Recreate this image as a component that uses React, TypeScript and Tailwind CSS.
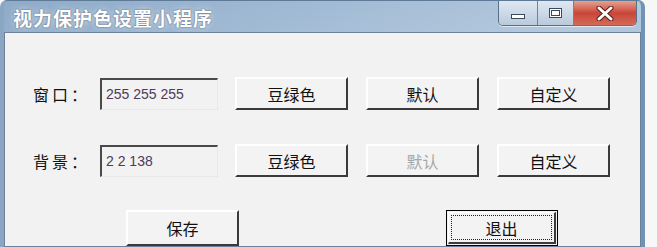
import { ReactNode } from "react"

const cjk = "font-['Noto_Sans_CJK_SC',sans-serif]"

type BtnProps = {
    children: ReactNode
    disabled?: boolean
    isDefault?: boolean
    className?: string
}

function Btn({ children, disabled, isDefault, className }: BtnProps) {
    if (isDefault) {
        return (
            <div className={`w-[112px] h-[36px] border border-black bg-[#f3f3f3] p-[1px] ${className ?? ""}`}>
                <div className="h-full border-t border-l border-white border-r-2 border-b-2 border-r-[#3c3c3c] border-b-[#3c3c3c] p-[2px]">
                    <div className={`h-full border border-dotted border-[#222] flex items-center justify-center text-[16px] text-[#111] ${cjk}`}>
                        {children}
                    </div>
                </div>
            </div>
        )
    }
    return (
        <div
            className={`w-[113px] h-[33px] flex items-center justify-center bg-[#f3f3f3] border-t-2 border-l-2 border-t-white border-l-white border-r-2 border-b-2 border-r-[#3a3a3a] border-b-[#3a3a3a] text-[16px] ${cjk} ${disabled ? "text-[#a8a8a8]" : "text-[#111]"} ${className ?? ""}`}
        >
            {children}
        </div>
    )
}

function Field({ value }: { value: string }) {
    return (
        <div className="w-[118px] h-[32px] flex items-center pl-[4px] bg-[#f2f2f2] border-t-2 border-l-2 border-t-[#4a4a4a] border-l-[#4a4a4a] border-r border-b border-r-[#e8e8e8] border-b-[#e8e8e8] font-['Liberation_Sans',sans-serif] text-[14px] text-[#4d3a5c]">
            {value}
        </div>
    )
}

function Row({ label, value, defaultDisabled }: { label: string, value: string, defaultDisabled?: boolean }) {
    return (
        <div className="flex items-center">
            <div className={`w-[67px] text-[16px] tracking-[3px] text-[#111] ${cjk}`}>{label}</div>
            <Field value={value} />
            <div className="flex gap-[18px] ml-[17px]">
                <Btn>豆绿色</Btn>
                <Btn disabled={defaultDisabled}>默认</Btn>
                <Btn>自定义</Btn>
            </div>
        </div>
    )
}

function CaptionButtons() {
    return (
        <div className="flex h-[25px] rounded-b-[5px] border border-t-0 border-[#5b6f86] overflow-hidden shadow-[0_1px_0_rgba(255,255,255,0.6)]">
            <div className="w-[39px] flex items-center justify-center bg-gradient-to-b from-[#dfe8f2] to-[#b9cadc] border-r border-[#6f849b]">
                <div className="w-[14px] h-[5px] mt-[6px] bg-white border border-[#3a4a5c]" />
            </div>
            <div className="w-[36px] flex items-center justify-center bg-gradient-to-b from-[#dfe8f2] to-[#b9cadc] border-r border-[#6f849b]">
                <div className="w-[13px] h-[10px] bg-white border border-[#3a4a5c] p-[1px]">
                    <div className="w-full h-full border border-[#3a4a5c]" />
                </div>
            </div>
            <div className="w-[62px] flex items-center justify-center bg-gradient-to-b from-[#e7a090] via-[#c8453a] to-[#d46a55]">
                <svg width="18" height="15" viewBox="0 0 18 15">
                    <path d="M3 2 L15 13 M15 2 L3 13" stroke="#5a1a14" strokeWidth="5" strokeLinecap="round" />
                    <path d="M3 2 L15 13 M15 2 L3 13" stroke="#ffffff" strokeWidth="3" strokeLinecap="round" />
                </svg>
            </div>
        </div>
    )
}

export default function App() {
    return (
        <div className="w-[657px] h-[247px] overflow-hidden bg-[#f7f7f7]">
            <div className="w-[645px] h-full flex flex-col rounded-t-[7px] bg-gradient-to-br from-[#8eabc9] via-[#b4c9de] to-[#88a9ca] border-l-4 border-r-4 border-l-[#8aa6c3] border-r-[#6f93b6] border-t border-t-[#5f7a96]">
                <div className="h-[35px] flex items-start justify-between pl-[9px] pr-[4px]">
                    <div className={`pt-[4px] text-[19px] leading-[26px] font-bold tracking-[1px] text-white ${cjk} [text-shadow:0_0_2px_rgba(40,60,90,0.9),0_0_6px_rgba(255,255,255,0.7)]`}>
                        视力保护色设置小程序
                    </div>
                    <CaptionButtons />
                </div>
                <div className="flex-1 bg-[#f2f2f2] border border-[#6d8299] pl-[28px] pt-[44px]">
                    <Row label="窗口：" value="255 255 255" />
                    <div className="h-[34px]" />
                    <Row label="背景：" value="2 2 138" defaultDisabled />
                    <div className="flex mt-[33px] ml-[93px]">
                        <Btn className="h-[36px]">保存</Btn>
                        <Btn isDefault className="ml-[207px]">退出</Btn>
                    </div>
                </div>
            </div>
        </div>
    )
}
